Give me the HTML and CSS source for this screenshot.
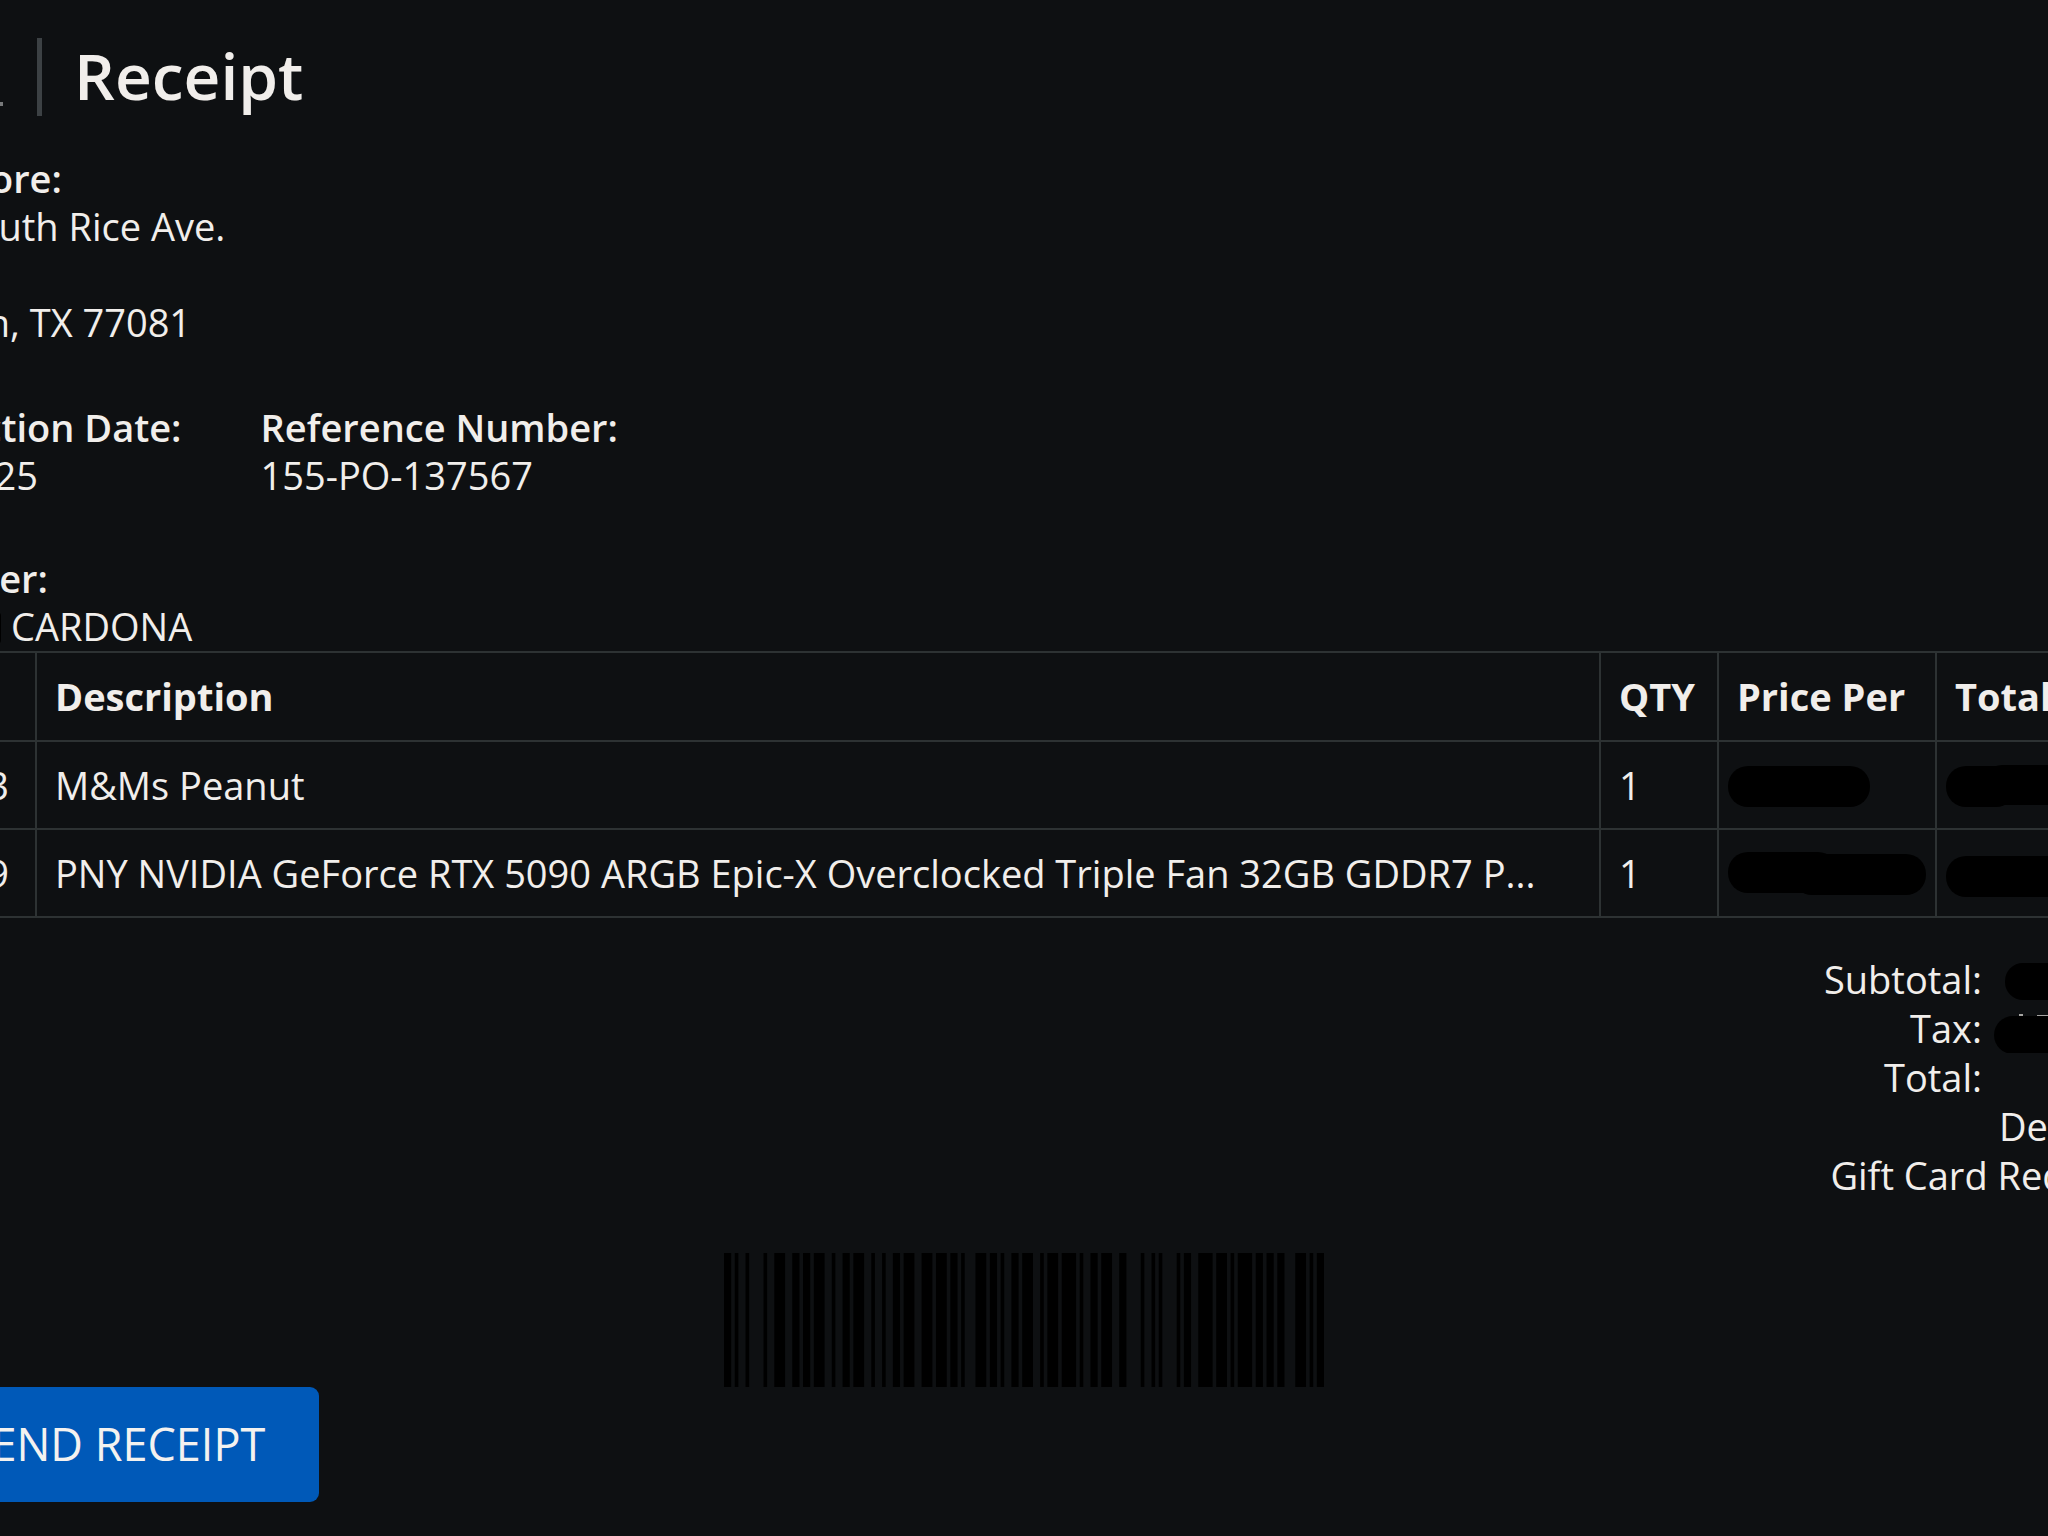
FILE: index.html
```html
<!DOCTYPE html>
<html lang="en">
<head>
  <meta charset="UTF-8" />
  <meta name="viewport" content="width=device-width, initial-scale=1.0"/>
  <title>Receipt</title>
  <link rel="stylesheet" href="styles.css">
</head>
<body>
  <main class="receipt">
    <header class="receipt-header">
      <svg class="logo" width="147" height="78" viewBox="0 0 147 78" aria-hidden="true">
        <rect x="0" y="64" width="145" height="4" fill="#77797a"/>
      </svg>
      <h1>Receipt</h1>
    </header>

    <section class="info">
      <h2>Your Store:</h2>
      <p>5305 South Rice Ave.</p>
      <p>&nbsp;</p>
      <p>Houston, TX 77081</p>
    </section>

    <div class="info-row">
      <section>
        <h2>Transaction Date:</h2>
        <p>3/30/2025</p>
      </section>
      <section>
        <h2>Reference Number:</h2>
        <p>155-PO-137567</p>
      </section>
    </div>

    <section class="info">
      <h2>Customer:</h2>
      <p class="customer">
        <svg width="143" height="48" viewBox="0 0 143 48" aria-hidden="true">
          <rect x="0" y="10" width="143" height="32" rx="4"/>
        </svg>
        <span>CARDONA</span>
      </p>
    </section>

    <table class="items">
      <colgroup>
        <col class="col-sku">
        <col>
        <col class="col-qty">
        <col class="col-price">
        <col class="col-total">
      </colgroup>
      <thead>
        <tr>
          <th></th>
          <th>Description</th>
          <th>QTY</th>
          <th>Price Per</th>
          <th>Total</th>
        </tr>
      </thead>
      <tbody>
        <tr>
          <td class="sku">3</td>
          <td>M&amp;Ms Peanut</td>
          <td>1</td>
          <td class="redacted">
            <svg width="142" height="48" viewBox="0 0 142 48" aria-hidden="true">
              <rect x="0" y="5" width="142" height="41" rx="20"/>
            </svg>
          </td>
          <td class="redacted">
            <svg width="200" height="48" viewBox="0 0 200 48" aria-hidden="true">
              <rect x="0" y="5" width="70" height="41" rx="20"/>
              <rect x="36" y="4" width="160" height="40" rx="20"/>
            </svg>
          </td>
        </tr>
        <tr>
          <td class="sku">9</td>
          <td>PNY NVIDIA GeForce RTX 5090 ARGB Epic-X Overclocked Triple Fan 32GB GDDR7 P...</td>
          <td>1</td>
          <td class="redacted">
            <svg width="198" height="48" viewBox="0 0 198 48" aria-hidden="true">
              <rect x="0" y="3" width="110" height="41" rx="20"/>
              <rect x="64" y="5" width="134" height="41" rx="20"/>
            </svg>
          </td>
          <td class="redacted">
            <svg width="200" height="48" viewBox="0 0 200 48" aria-hidden="true">
              <rect x="0" y="7" width="196" height="41" rx="20"/>
            </svg>
          </td>
        </tr>
      </tbody>
    </table>

    <section class="totals">
      <dl>
        <dt>Subtotal:</dt>
        <dd>
          <svg width="208" height="49" viewBox="0 0 208 49" aria-hidden="true">
            <rect x="23" y="8" width="170" height="37" rx="18"/>
          </svg>
        </dd>
        <dt>Tax:</dt>
        <dd>
          <svg width="208" height="49" viewBox="0 0 208 49" aria-hidden="true">
            <path d="M37 11h4M55 12h11" stroke="#a5a4a2" stroke-width="2"/>
            <rect x="12" y="12" width="180" height="38" rx="19"/>
          </svg>
        </dd>
        <dt>Total:</dt>
        <dd></dd>
      </dl>
      <p>Debit Card</p>
      <p>Gift Card Redeemed</p>
    </section>

    <svg class="barcode" viewBox="0 0 167 37" preserveAspectRatio="none" role="img" aria-label="Barcode" id="barcode"></svg>

    <button class="resend" type="button">RESEND RECEIPT</button>
  </main>

  <script>
    // bar, space, bar, space... widths in modules
    const symbols = ["211214", "123221", "213212", "213212", "122132", "313121", "133121",
      "122132", "113141", "122132", "241211", "141122", "413111", "412121", "2331112"];
    let x = 0;
    let d = "";
    [...symbols.join("")].forEach((n, i) => {
      if (i % 2 === 0) d += `M${x} 0h${n}v37h-${n}z`;
      x += Number(n);
    });
    document.getElementById("barcode").innerHTML = `<path d="${d}"/>`;
  </script>
</body>
</html>
```
FILE: styles.css
```css
* {
  box-sizing: border-box;
}
body {
  margin: 0;
  overflow-x: hidden;
  font-family: "Open Sans", "Noto Sans", sans-serif;
  font-size: 38px;
  line-height: 48px;
  color: #f1eeeb;
  background-color: #0e1012;
}
h1, h2, p, dl, dt, dd {
  margin: 0;
}
svg {
  display: block;
}
.receipt {
  margin: 0 -142px;
  padding: 38px 0 32px;
}
.receipt-header {
  display: flex;
  align-items: flex-start;
  gap: 32px;
  margin-bottom: 38px;
}
.receipt-header h1 {
  height: 78px;
  padding-left: 32px;
  border-left: 5px solid #3c4144;
  font-size: 64px;
  font-weight: 600;
  line-height: 76px;
}
h2 {
  font-size: 38px;
  font-weight: 600;
}
.info-row {
  display: flex;
  gap: 79px;
  margin: 57px 0 55px;
}
.customer {
  display: flex;
  gap: 10px;
}

.items {
  width: 100%;
  margin-top: 1px;
  table-layout: fixed;
  border-collapse: collapse;
}
.items th,
.items td {
  padding: 19px 18px;
  border: 2px solid #2d3233;
  text-align: left;
  white-space: nowrap;
}
.items th {
  padding-bottom: 20px;
  font-weight: 700;
}
.items .sku {
  padding-right: 26px;
  text-align: right;
}
.items .redacted {
  padding-left: 9px;
  padding-right: 0;
}
.col-sku {
  width: 177px;
}
.col-qty {
  width: 118px;
}
.col-price {
  width: 218px;
}
.col-total {
  width: 253px;
}

.totals {
  margin-top: 37px;
  line-height: 49px;
  text-align: right;
}
.totals dl {
  display: grid;
  grid-template-columns: 1fr 208px;
}
.totals dd {
  height: 49px;
}
.totals p {
  padding-right: 2px;
}
.barcode {
  width: 600px;
  height: 134px;
  margin: 53px auto 0;
}
.resend {
  display: block;
  padding: 27px 54px 28px 56px;
  border: none;
  border-radius: 9px;
  font-family: inherit;
  font-size: 45px;
  line-height: 60px;
  color: #f4f2f0;
  background-color: #0059b8;
  cursor: pointer;
}
```
